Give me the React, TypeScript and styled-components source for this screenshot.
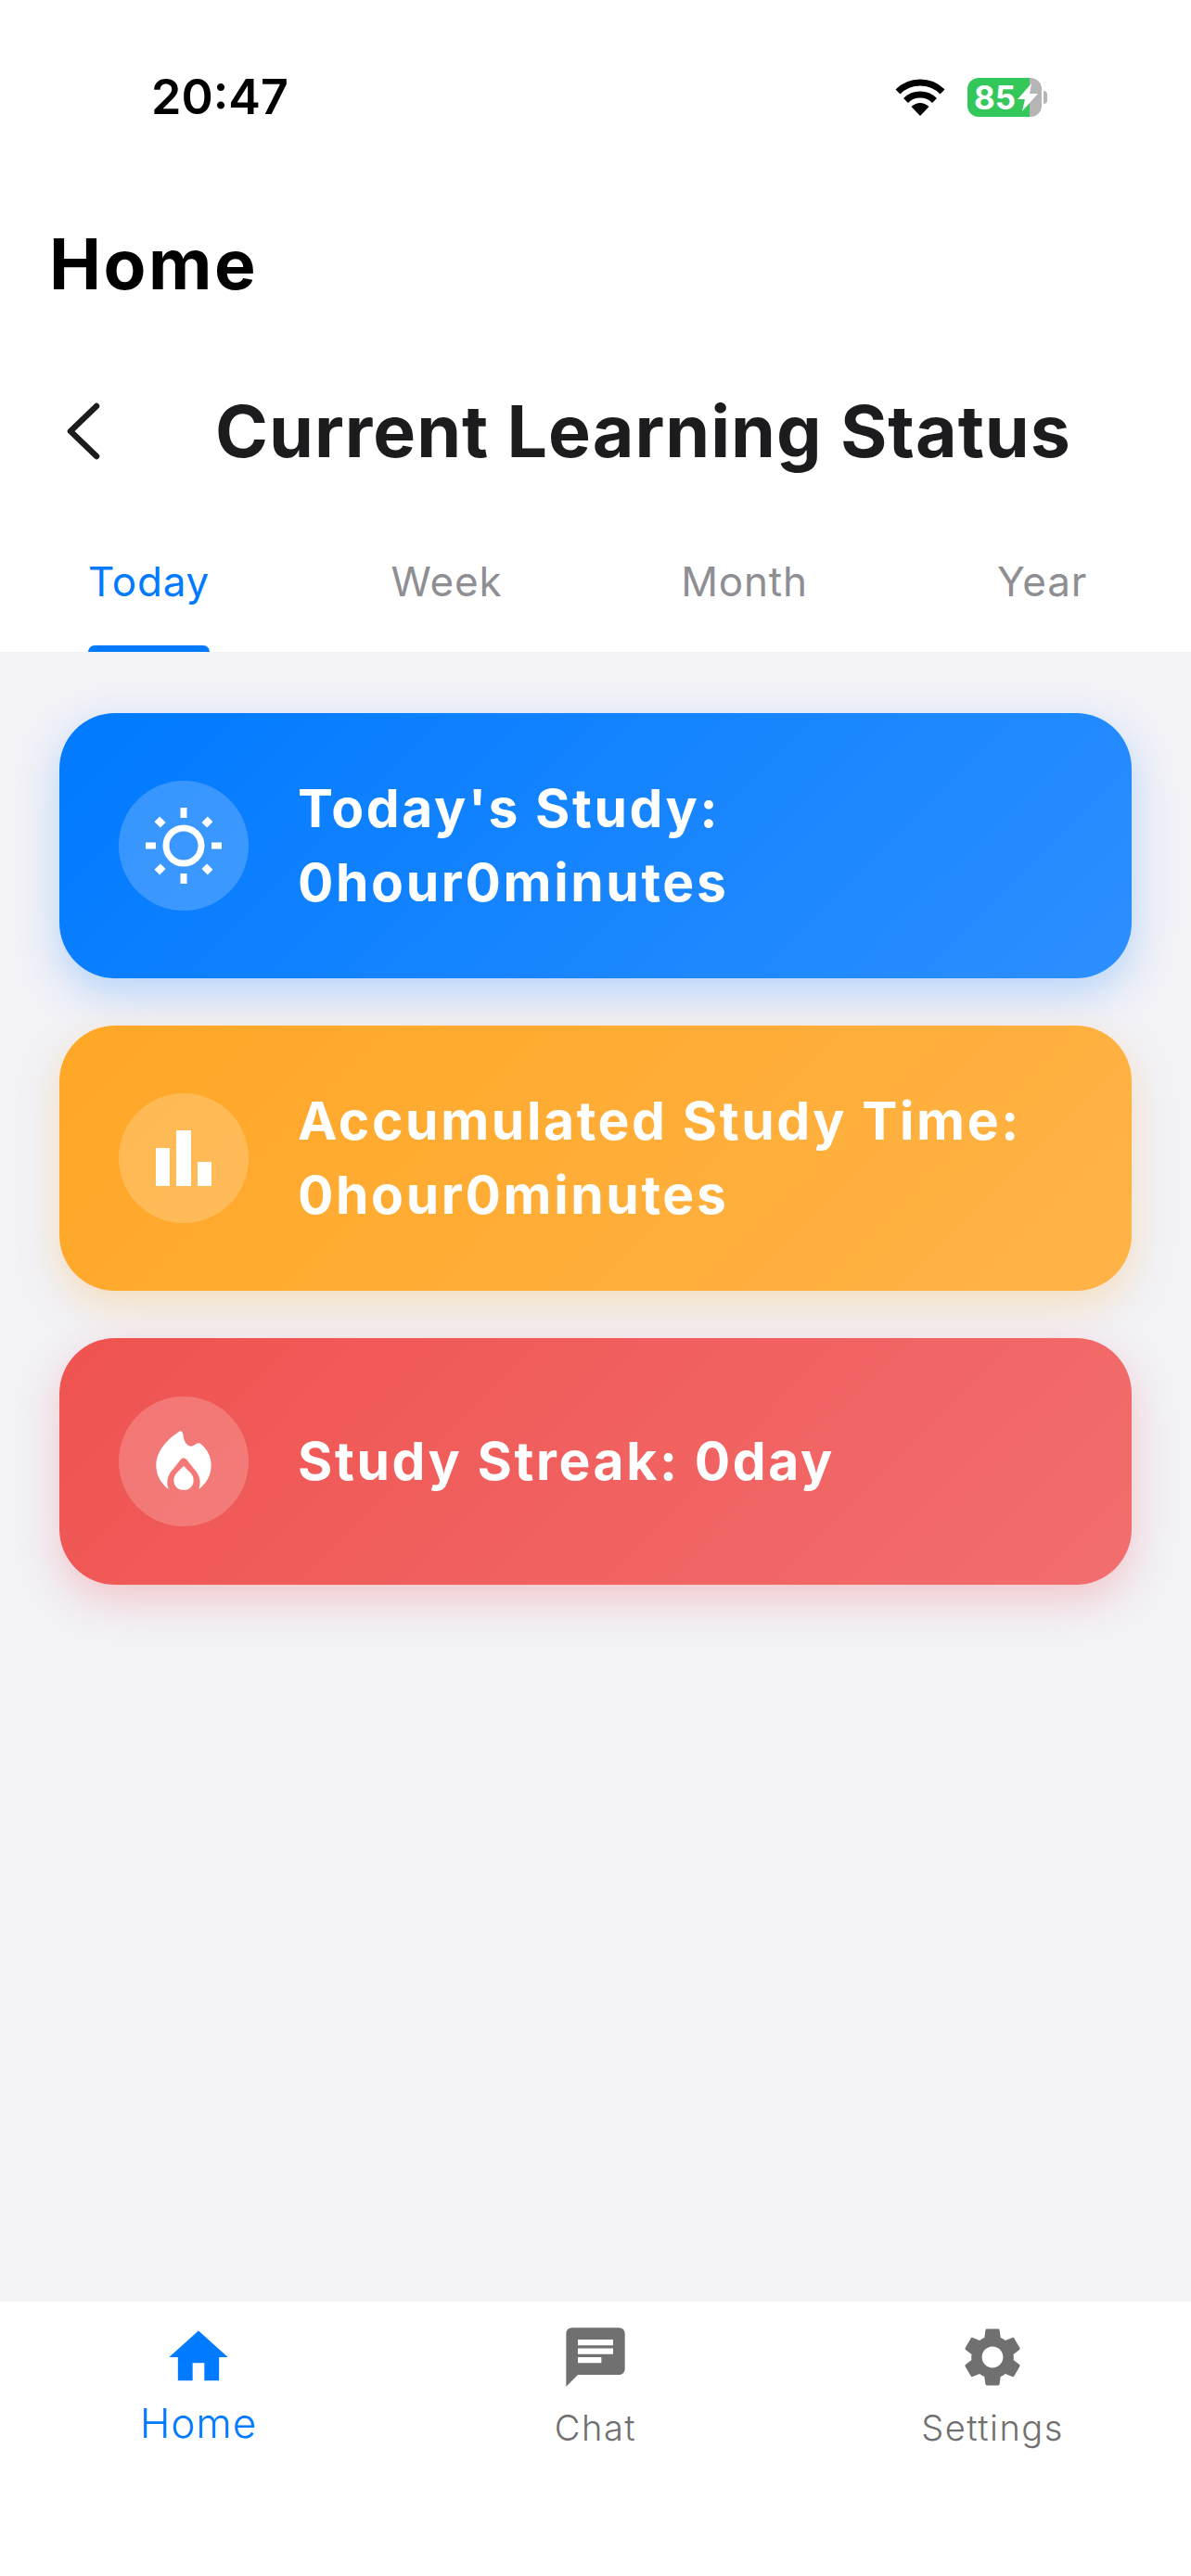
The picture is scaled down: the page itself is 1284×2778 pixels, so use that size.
import React from "react";
import styled, { createGlobalStyle } from "styled-components";

const Global = createGlobalStyle`
  html, body { margin: 0; padding: 0; background: #fff; }
  * { box-sizing: border-box; }
  body { font-family: Inter, "Liberation Sans", sans-serif; }
`;

const Page = styled.div`
  width: 1284px;
  height: 2778px;
  display: flex;
  flex-direction: column;
  background: #fff;
  overflow: hidden;
`;
const StatusBar = styled.div`
  height: 241px;
  flex: none;
  display: flex;
  align-items: flex-start;
  justify-content: space-between;
  padding: 74px 161px 0 163px;
`;
const Clock = styled.span`
  font-size: 52px;
  line-height: 62px;
  font-weight: 600;
  color: #000;
`;
const StatusIcons = styled.div`
  display: flex;
  align-items: center;
  gap: 24px;
  padding-top: 10px;
`;
const Battery = styled.div`
  position: relative;
  width: 80px;
  height: 42px;
  border-radius: 12px;
  background: linear-gradient(to right, #34c759 83.5%, #b5b5b5 83.5%);
  display: flex;
  align-items: center;
  padding-left: 7px;
  gap: 2px;
  &::after {
    content: "";
    position: absolute;
    right: -6px;
    top: 14px;
    width: 4px;
    height: 14px;
    border-radius: 0 6px 6px 0;
    background: #b5b5b5;
  }
`;
const BatteryText = styled.span`
  font-size: 35px;
  line-height: 42px;
  font-weight: 700;
  color: #fff;
`;
const PageTitle = styled.h1`
  margin: 0;
  flex: none;
  height: 171px;
  padding-left: 53px;
  font-size: 75px;
  line-height: 88px;
  font-weight: 700;
  letter-spacing: 2.5px;
  color: #000;
`;
const Header = styled.div`
  flex: none;
  height: 106px;
  padding-left: 70px;
  display: flex;
  align-items: center;
`;
const HeaderTitle = styled.h2`
  margin: 0 0 0 124px;
  font-size: 77px;
  line-height: 106px;
  font-weight: 700;
  letter-spacing: 1px;
  color: #1c1c1e;
`;
const Tabs = styled.div`
  flex: none;
  height: 185px;
  display: grid;
  grid-template-columns: repeat(4, 1fr);
`;
const Tab = styled.div<{ $active?: boolean }>`
  display: flex;
  flex-direction: column;
  align-items: center;
  padding-top: 81px;
  font-size: 44px;
  line-height: 56px;
  letter-spacing: 0.8px;
  color: ${(p) => (p.$active ? "#007aff" : "#8e8e93")};
`;
const TabLabel = styled.span`
  position: relative;
  display: block;
  height: 104px;
`;
const TabBar = styled.span`
  position: absolute;
  left: 0;
  right: 0;
  bottom: 0;
  height: 7px;
  border-radius: 7px 7px 0 0;
  background: #007aff;
`;
const Content = styled.main`
  flex: 1;
  background: #f2f2f7;
  padding: 66px 64px 0;
  display: flex;
  flex-direction: column;
  gap: 51px;
`;
const Card = styled.section<{ $from: string; $to: string; $shadow: string }>`
  display: flex;
  align-items: center;
  gap: 53px;
  padding: 63px 64px;
  border-radius: 60px;
  background: linear-gradient(135deg, ${(p) => p.$from}, ${(p) => p.$to});
  box-shadow: 0 16px 44px ${(p) => p.$shadow};
`;
const IconCircle = styled.div`
  flex: none;
  width: 140px;
  height: 140px;
  border-radius: 50%;
  background: rgba(255, 255, 255, 0.2);
  display: flex;
  align-items: center;
  justify-content: center;
`;
const CardText = styled.div`
  font-size: 57px;
  line-height: 80px;
  font-weight: 700;
  letter-spacing: 2.6px;
  color: #fff;
`;
const BottomNav = styled.nav`
  flex: none;
  height: 296px;
  background: #fff;
  display: grid;
  grid-template-columns: repeat(3, 1fr);
`;
const NavItem = styled.div<{ $active?: boolean }>`
  display: flex;
  flex-direction: column;
  align-items: center;
  padding-top: 22px;
  color: ${(p) => (p.$active ? "#007aff" : "#707070")};
`;
const NavLabel = styled.span<{ $active?: boolean }>`
  font-size: ${(p) => (p.$active ? 44 : 38)}px;
  line-height: ${(p) => (p.$active ? 52 : 46)}px;
  margin-top: ${(p) => (p.$active ? 7 : 15)}px;
  letter-spacing: ${(p) => (p.$active ? 1 : 1.5)}px;
  font-weight: 300;
`;

const Wifi = () => (
  <svg width="54" height="40" viewBox="0 0 54 40">
    <path d="M3 14A34 34 0 0 1 51 14" fill="none" stroke="#000" strokeWidth="7" />
    <path d="M11.5 23.5A22 22 0 0 1 42.5 23.5" fill="none" stroke="#000" strokeWidth="7" />
    <path d="M17.5 30Q27 22 36.5 30L27 40Z" fill="#000" />
  </svg>
);
const Bolt = () => (
  <svg width="22" height="30" viewBox="0 0 22 30">
    <path d="M15 0L0 17h8l-3 13 17-19h-9z" fill="#fff" />
  </svg>
);
const Chevron = () => (
  <svg width="38" height="62" viewBox="0 0 38 62">
    <path d="M34 4L6 31l28 27" fill="none" stroke="#1c1c1e" strokeWidth="6.5" strokeLinecap="round" strokeLinejoin="round" />
  </svg>
);
const Sun = () => (
  <svg width="86" height="86" viewBox="0 0 86 86" fill="#fff">
    <circle cx="43" cy="43" r="19" fill="none" stroke="#fff" strokeWidth="7" />
    <rect x="39.5" y="2" width="7" height="11" />
    <rect x="39.5" y="73" width="7" height="11" />
    <rect x="2" y="39.5" width="11" height="7" />
    <rect x="73" y="39.5" width="11" height="7" />
    {[45, 135, 225, 315].map((a) => (
      <rect key={a} x="39" y="2.5" width="8" height="9" transform={`rotate(${a} 43 43)`} />
    ))}
  </svg>
);
const Bars = () => (
  <svg width="60" height="60" viewBox="0 0 60 60" fill="#fff">
    <rect x="0" y="19" width="15" height="41" />
    <rect x="22" y="0" width="16" height="60" />
    <rect x="45" y="34" width="15" height="26" />
  </svg>
);
const Flame = () => (
  <svg width="60" height="66" viewBox="144 126 180 198" fill="#fff">
    <path d="M222 127C228 127 232 132 233 142C234 160 245 176 258 176C268 176 276 164 285 166C305 178 323 205 323 238C323 272 306 298 283 315C292 290 285 268 268 250L243 218C237 212 231 212 225 218L200 250C183 268 176 290 185 315C162 298 145 272 145 238C145 190 185 150 222 127Z" />
    <path d="M234 240L256 262C275 282 266 318 234 318C202 318 193 282 212 262Z" />
  </svg>
);
const NavIcon = ({ d }: { d: string }) => (
  <svg width="76" height="76" viewBox="0 0 24 24" fill="currentColor">
    <path d={d} />
  </svg>
);
const HOME = "M10 20v-6h4v6h5v-8h3L12 3 2 12h3v8z";
const CHAT = "M20 2H4c-1.1 0-1.99.9-1.99 2L2 22l4-4h14c1.1 0 2-.9 2-2V4c0-1.1-.9-2-2-2zM6 9h12v2H6V9zm8 5H6v-2h8v2zm4-6H6V6h12v2z";
const GEAR = "M19.14 12.94c.04-.3.06-.61.06-.94 0-.32-.02-.64-.07-.94l2.03-1.58c.18-.14.23-.41.12-.61l-1.92-3.32c-.12-.22-.37-.29-.59-.22l-2.39.96c-.5-.38-1.03-.7-1.62-.94l-.36-2.54c-.04-.24-.24-.41-.48-.41h-3.84c-.24 0-.43.17-.47.41l-.36 2.54c-.59.24-1.13.57-1.62.94l-2.39-.96c-.22-.08-.47 0-.59.22L2.74 8.87c-.12.21-.08.47.12.61l2.03 1.58c-.05.3-.09.63-.09.94s.02.64.07.94l-2.03 1.58c-.18.14-.23.41-.12.61l1.92 3.32c.12.22.37.29.59.22l2.39-.96c.5.38 1.03.7 1.62.94l.36 2.54c.05.24.24.41.48.41h3.84c.24 0 .44-.17.47-.41l.36-2.54c.59-.24 1.13-.56 1.62-.94l2.39.96c.22.08.47 0 .59-.22l1.92-3.32c.12-.22.07-.47-.12-.61l-2.01-1.58zM12 15.6c-1.98 0-3.6-1.62-3.6-3.6s1.62-3.6 3.6-3.6 3.6 1.62 3.6 3.6-1.62 3.6-3.6 3.6z";

export default function App() {
  return (
    <Page>
      <Global />
      <StatusBar>
        <Clock>20:47</Clock>
        <StatusIcons>
          <Wifi />
          <Battery>
            <BatteryText>85</BatteryText>
            <Bolt />
          </Battery>
        </StatusIcons>
      </StatusBar>
      <PageTitle>Home</PageTitle>
      <Header>
        <Chevron />
        <HeaderTitle>Current Learning Status</HeaderTitle>
      </Header>
      <Tabs>
        <Tab $active>
          <TabLabel>
            Today
            <TabBar />
          </TabLabel>
        </Tab>
        <Tab>
          <TabLabel>Week</TabLabel>
        </Tab>
        <Tab>
          <TabLabel>Month</TabLabel>
        </Tab>
        <Tab>
          <TabLabel>Year</TabLabel>
        </Tab>
      </Tabs>
      <Content>
        <Card $from="#007aff" $to="#2c8fff" $shadow="rgba(0,122,255,0.25)">
          <IconCircle>
            <Sun />
          </IconCircle>
          <CardText>
            Today's Study:
            <br />
            0hour0minutes
          </CardText>
        </Card>
        <Card $from="#ffa726" $to="#ffb347" $shadow="rgba(255,167,38,0.27)">
          <IconCircle>
            <Bars />
          </IconCircle>
          <CardText>
            Accumulated Study Time:
            <br />
            0hour0minutes
          </CardText>
        </Card>
        <Card $from="#ef5350" $to="#f26e6e" $shadow="rgba(239,83,80,0.27)">
          <IconCircle>
            <Flame />
          </IconCircle>
          <CardText>Study Streak: 0day</CardText>
        </Card>
      </Content>
      <BottomNav>
        <NavItem $active>
          <NavIcon d={HOME} />
          <NavLabel $active>Home</NavLabel>
        </NavItem>
        <NavItem>
          <NavIcon d={CHAT} />
          <NavLabel>Chat</NavLabel>
        </NavItem>
        <NavItem>
          <NavIcon d={GEAR} />
          <NavLabel>Settings</NavLabel>
        </NavItem>
      </BottomNav>
    </Page>
  );
}
